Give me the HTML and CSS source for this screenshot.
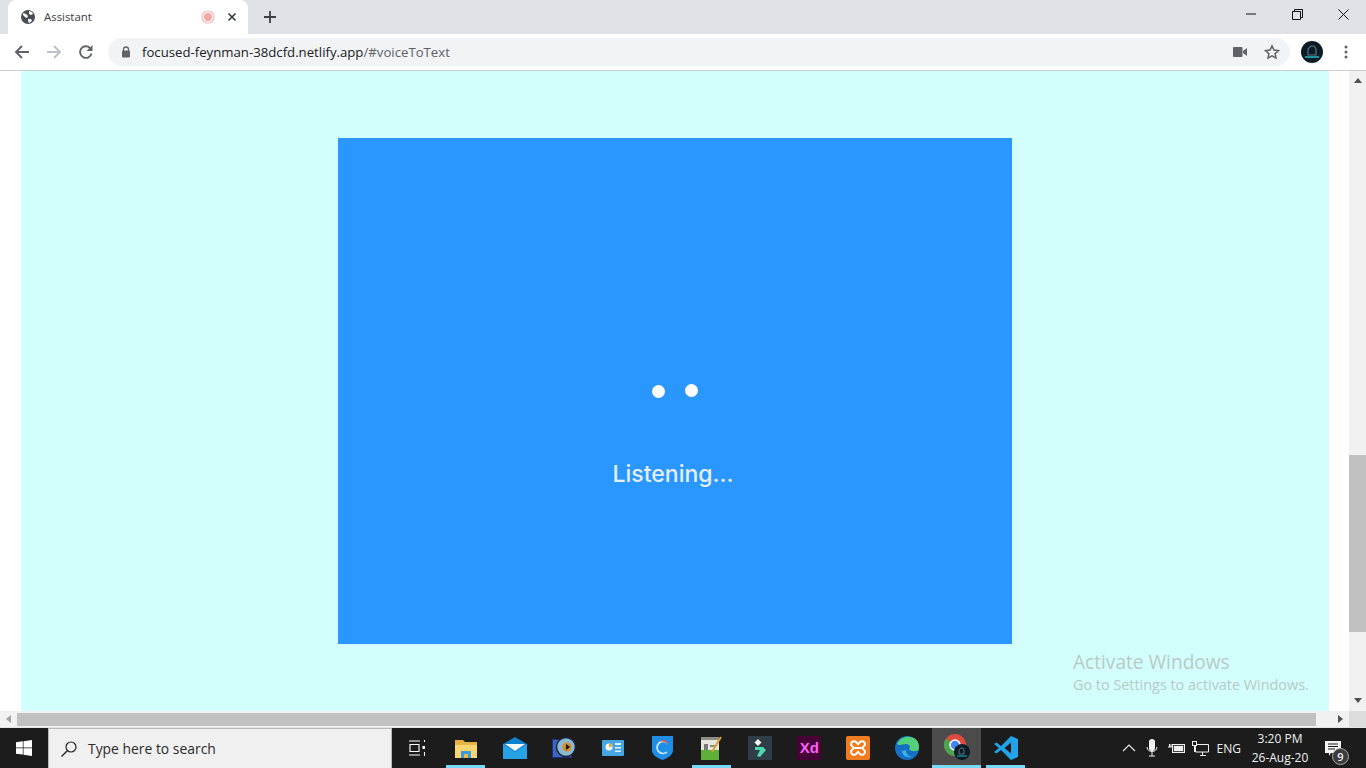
FILE: index.html
```html
<!DOCTYPE html>
<html lang="en">
  <head>
    <meta charset="UTF-8" />
    <meta name="viewport" content="width=device-width, initial-scale=1.0" />
    <title>Assistant</title>
    <link rel="stylesheet" href="styles.css">
  </head>
  <body>
    <div class="tabstrip">
      <div class="tab">
        <svg class="favicon" width="16" height="16" viewBox="0 0 16 16">
          <circle cx="8" cy="8" r="7" fill="#4a4d51" />
          <path d="M3 4l3 1 2 2-1 2-2-1-2-2zM9 2l3 1 1 2-2 1-2-1zM8 10l3 0 1 2-3 2-1-2z" fill="#fff" />
        </svg>
        <span class="tab-title">Assistant</span>
        <svg class="rec" width="14" height="14" viewBox="0 0 14 14">
          <circle cx="7" cy="7" r="6" fill="none" stroke="#f6b9b7" stroke-width="1.2" />
          <circle cx="7" cy="7" r="4.2" fill="#f5a9a6" />
        </svg>
        <svg class="tab-close" width="10" height="10" viewBox="0 0 10 10">
          <path d="M1.5 1.5l7 7M8.5 1.5l-7 7" stroke="#3c4043" stroke-width="1.7" />
        </svg>
      </div>
      <svg class="newtab" width="14" height="14" viewBox="0 0 14 14">
        <path d="M7 1v12M1 7h12" stroke="#3c4043" stroke-width="1.8" />
      </svg>
      <div class="winctl">
        <span class="winbtn">
          <svg width="10" height="2" viewBox="0 0 10 2"><path d="M0 1h10" stroke="#111" stroke-width="1" /></svg>
        </span>
        <span class="winbtn">
          <svg width="11" height="11" viewBox="0 0 11 11">
            <path d="M.5 2.5h8v8h-8zM2.5 2.5v-2h8v8h-2" fill="none" stroke="#111" stroke-width="1" />
          </svg>
        </span>
        <span class="winbtn">
          <svg width="11" height="11" viewBox="0 0 11 11"><path d="M.5.5l10 10M10.5.5l-10 10" stroke="#111" stroke-width="1" /></svg>
        </span>
      </div>
    </div>

    <div class="toolbar">
      <svg class="nav" width="16" height="16" viewBox="0 0 16 16">
        <path d="M15 8H2M8 2L2 8l6 6" fill="none" stroke="#5f6368" stroke-width="1.9" />
      </svg>
      <svg class="nav" width="16" height="16" viewBox="0 0 16 16">
        <path d="M1 8h13M8 2l6 6-6 6" fill="none" stroke="#bdc1c6" stroke-width="1.9" />
      </svg>
      <svg class="nav" width="16" height="16" viewBox="0 0 16 16">
        <path d="M13.5 9.5A5.8 5.8 0 1 1 12 4" fill="none" stroke="#5f6368" stroke-width="1.9" />
        <path d="M14.5 1v6h-6z" fill="#5f6368" />
      </svg>
      <div class="omnibox">
        <svg class="lock" width="10" height="12" viewBox="0 0 10 12">
          <path d="M2.5 5V3.5a2.5 2.5 0 0 1 5 0V5" fill="none" stroke="#5f6368" stroke-width="1.3" />
          <rect x="1" y="4.5" width="8" height="7" rx="1" fill="#5f6368" />
        </svg>
        <span class="url">focused-feynman-38dcfd.netlify.app<span class="url-rest">/#voiceToText</span></span>
        <svg class="cam" width="14" height="10" viewBox="0 0 14 10">
          <rect x="0" y="0" width="9.5" height="10" rx="1" fill="#5f6368" />
          <path d="M10 4l4-3v8l-4-3z" fill="#5f6368" />
        </svg>
        <svg class="star" width="16" height="16" viewBox="0 0 16 16">
          <path d="M8 1.8l1.9 4.2 4.6.5-3.4 3.1.9 4.5-4-2.300-4 2.300.9-4.500-3.400-3.100 4.600-.5z" fill="none" stroke="#5f6368" stroke-width="1.5" />
        </svg>
      </div>
      <svg class="avatar" width="22" height="22" viewBox="0 0 22 22">
        <circle cx="11" cy="11" r="11" fill="#0c1c26" />
        <path d="M7 14V8l3-3h3l2 3v6z" fill="none" stroke="#5c7282" stroke-width="1.2" />
        <path d="M4 16h14" stroke="#1fb5b5" stroke-width="1.6" />
      </svg>
      <svg class="menu" width="4" height="14" viewBox="0 0 4 14">
        <circle cx="2" cy="2" r="1.5" fill="#5f6368" />
        <circle cx="2" cy="7" r="1.5" fill="#5f6368" />
        <circle cx="2" cy="12" r="1.5" fill="#5f6368" />
      </svg>
    </div>

    <div class="viewport">
      <div class="page">
        <div class="panel">
          <div class="card">
            <div class="dots">
              <span class="dot"></span>
              <span class="dot dot-up"></span>
            </div>
            <p class="listening">Listening...</p>
          </div>
        </div>
        <div class="vscroll">
          <span class="arrow arrow-up"></span>
          <div class="vtrack"><div class="vthumb"></div></div>
          <span class="arrow arrow-down"></span>
        </div>
      </div>
      <div class="hscroll">
        <span class="arrow arrow-left"></span>
        <div class="hthumb"></div>
        <span class="arrow arrow-right"></span>
        <span class="corner"></span>
      </div>
      <div class="activate">
        <div class="activate-title">Activate Windows</div>
        <div class="activate-sub">Go to Settings to activate Windows.</div>
      </div>
    </div>

    <div class="taskbar">
      <div class="start">
        <svg width="16" height="16" viewBox="0 0 16 16">
          <path d="M0 2.3l6.8-1v6.200H0zM7.500 1.200L16 0v7.500H7.500zM0 8.300h6.800v6.300L0 13.700zM7.500 8.300H16V16l-8.500-1.200z" fill="#fff" />
        </svg>
      </div>
      <div class="search">
        <svg width="18" height="18" viewBox="0 0 18 18">
          <circle cx="11" cy="7" r="5" fill="none" stroke="#222" stroke-width="1.2" />
          <path d="M7.3 10.7L1.5 16.5" stroke="#222" stroke-width="1.3" />
        </svg>
        <span>Type here to search</span>
      </div>
      <div class="apps">
        <div class="app">
          <svg width="16" height="16" viewBox="0 0 16 16" fill="none" stroke="#fff" stroke-width="1.1">
            <path d="M0 1h11M0 15h11M1 4.5h9v7H1zM15.5 0v2M15.5 12v4" />
            <rect x="13.5" y="6" width="2.5" height="3" fill="#fff" stroke="none" />
          </svg>
        </div>
        <div class="app app-open">
          <svg width="22" height="19" viewBox="0 0 22 19">
            <path d="M0 1h8l2 2h12v5H0z" fill="#e5b13f" />
            <rect x="0" y="4" width="22" height="15" fill="#fbd56f" />
            <rect x="0" y="4" width="22" height="2" fill="#e8b54a" />
            <path d="M6 12h10v7h-3v-4H9v4H6z" fill="#3a9ae0" />
            <rect x="9" y="15" width="4" height="4" fill="#f0b840" />
          </svg>
        </div>
        <div class="app">
          <svg width="24" height="22" viewBox="0 0 24 22">
            <path d="M0 7L12 0l12 7v15H0z" fill="#0f7fd0" />
            <path d="M2 7h20l-10 7z" fill="#f4f8fb" />
            <path d="M0 7l12 8 12-8v15H0z" fill="#27a2e6" />
          </svg>
        </div>
        <div class="app">
          <svg width="24" height="22" viewBox="0 0 24 22">
            <rect x="0.5" y="2.5" width="19" height="18" fill="#3d66c4" stroke="#1e2e78" />
            <circle cx="14" cy="10" r="9.5" fill="#8bbad0" stroke="#1a2436" stroke-width="1.5" />
            <circle cx="15" cy="10" r="4.5" fill="#d98a24" />
            <path d="M14 7l4 3-4 3z" fill="#111" />
          </svg>
        </div>
        <div class="app">
          <svg width="22" height="16" viewBox="0 0 22 16">
            <rect width="22" height="16" rx="1" fill="#45a8e4" />
            <circle cx="7" cy="7" r="3.5" fill="#fff" />
            <path d="M7 7V3.5A3.5 3.5 0 0 1 10.5 7z" fill="#f0a93a" />
            <path d="M13 3h6v2h-6zM13 7h6v1.5h-6zM13 10.5h6V12h-6z" fill="#dff1fb" />
          </svg>
        </div>
        <div class="app">
          <svg width="21" height="24" viewBox="0 0 21 24">
            <path d="M0 0h21v14c0 5-5 8-10.5 10C5 22 0 19 0 14z" fill="#1f8fe6" />
            <path d="M15 7a6 6 0 1 0 0 9" fill="none" stroke="#d8eefc" stroke-width="1.6" />
            <path d="M9 5a6 6 0 0 1 6 2" fill="none" stroke="#e7553f" stroke-width="1.6" />
          </svg>
        </div>
        <div class="app app-open">
          <svg width="22" height="24" viewBox="0 0 22 24">
            <rect x="1" y="1" width="18" height="23" fill="#e6e6dc" />
            <path d="M1 14h18v10H1z" fill="#5fb03a" />
            <path d="M1 1h18v3H1z" fill="#8d8d84" />
            <path d="M5 8v6M7 8v6M10 10h5" stroke="#333" stroke-width="1.2" />
            <path d="M21 1L12 16" stroke="#d9a02e" stroke-width="2" />
          </svg>
        </div>
        <div class="app">
          <svg width="24" height="24" viewBox="0 0 24 24">
            <rect width="24" height="24" fill="#2f3e46" />
            <path d="M10 3l3.5 3.5L10 10 6.5 6.5z" fill="#f4f4f4" />
            <path d="M7 11h8l3 3-6 7-3-1 3-6H7z" fill="#4fd8b0" />
          </svg>
        </div>
        <div class="app">
          <div class="xd">Xd</div>
        </div>
        <div class="app">
          <svg width="24" height="24" viewBox="0 0 24 24">
            <rect width="24" height="24" rx="2" fill="#f07c22" />
            <path d="M5 8a3 3 0 0 1 5-2l2 2 2-2a3 3 0 0 1 5 2c0 2-2 3-3 4 1 1 3 2 3 4a3 3 0 0 1-5 2l-2-2-2 2a3 3 0 0 1-5-2c0-2 2-3 3-4-1-1-3-2-3-4zM9 12h6" fill="none" stroke="#fff" stroke-width="2" />
          </svg>
        </div>
        <div class="app">
          <svg width="24" height="24" viewBox="0 0 24 24">
            <circle cx="12" cy="12" r="12" fill="#1570c4" />
            <path d="M2 8C5 1 13-1 19 2c4 2 5.5 7 5 11-2 3-8 3-10 0 2-1 1-5-3-5-4 0-7 2-9 0z" fill="#52d07a" />
            <path d="M7 15c0 4 4 7 10 6-4-1-6-3-6-7z" fill="#3db3e8" />
          </svg>
        </div>
        <div class="app app-active">
          <svg width="26" height="26" viewBox="0 0 26 26">
            <circle cx="11" cy="11" r="11" fill="#dd4b3e" />
            <path d="M11 11L1.5 16.5A11 11 0 0 1 2 4.5z" fill="#4ba64f" />
            <path d="M11 22A11 11 0 0 1 1.5 16.5L11 11z" fill="#4ba64f" />
            <path d="M11 11h11a11 11 0 0 1-11 11z" fill="#f8c52c" />
            <circle cx="11" cy="11" r="5" fill="#4285f4" stroke="#fff" stroke-width="1.5" />
            <circle cx="18" cy="18" r="8" fill="#0c1c26" />
            <path d="M15 20v-4l2-2h2l1 2v4z" fill="none" stroke="#5c7282" />
            <path d="M13 22h10" stroke="#1fb5b5" />
          </svg>
        </div>
        <div class="app app-open">
          <svg width="24" height="24" viewBox="0 0 24 24">
            <path d="M17 0l7 3v18l-7 3L7 14l-4.5 3.5L0 16l5-4-5-4 2.5-1.5L7 10z" fill="#23a3ea" />
            <path d="M17 6.5L10.5 12l6.5 5.5z" fill="#1c1c1c" />
          </svg>
        </div>
      </div>
      <div class="tray">
        <svg class="tray-chev" width="14" height="8" viewBox="0 0 14 8">
          <path d="M1 7l6-6 6 6" fill="none" stroke="#e8e8e8" stroke-width="1.2" />
        </svg>
        <svg class="tray-mic" width="12" height="18" viewBox="0 0 12 18">
          <rect x="3" y="0" width="6" height="12" rx="3" fill="#f4f4f4" />
          <path d="M1 8c0 6 10 6 10 0M6 13v4M3 17h6" fill="none" stroke="#f4f4f4" />
        </svg>
        <svg class="tray-batt" width="17" height="12" viewBox="0 0 17 12">
          <rect x="4.5" y="2.5" width="12" height="8" fill="#444" stroke="#f0f0f0" />
          <rect x="6" y="4" width="9" height="5" fill="#f0f0f0" />
          <path d="M0 5h4M1.5 2v3M3 2v3" stroke="#f0f0f0" />
        </svg>
        <svg class="tray-net" width="17" height="15" viewBox="0 0 17 15">
          <path d="M3.5 3.5H16.5V11H3.5zM8 14.5h6M10.5 11v3.5" fill="none" stroke="#f0f0f0" />
          <rect x="0.5" y="0.5" width="4" height="4" fill="#1c1c1c" stroke="#f0f0f0" />
          <path d="M2.5 4.5V11" stroke="#f0f0f0" />
        </svg>
        <span class="tray-lang">ENG</span>
        <div class="clock">
          <div>3:20 PM</div>
          <div>26-Aug-20</div>
        </div>
        <div class="notif">
          <svg width="16" height="15" viewBox="0 0 16 15">
            <path d="M0 0h16v12H6l-2 3v-3H0z" fill="#f4f4f4" />
            <path d="M3 3h10M3 5.5h10M3 8h7" stroke="#1c1c1c" />
          </svg>
          <span class="badge">9</span>
        </div>
      </div>
    </div>
  </body>
</html>
```

FILE: styles.css
```css
* {
  margin: 0;
  padding: 0;
  box-sizing: border-box;
}
html,
body {
  height: 768px;
  overflow: hidden;
}
body {
  display: flex;
  flex-direction: column;
  width: 1366px;
  background: #fff;
  font-family: "Open Sans", "Liberation Sans", sans-serif;
}
svg {
  display: block;
  flex: none;
}

/* tabs */
.tabstrip {
  display: flex;
  align-items: center;
  height: 34px;
  padding-left: 8px;
  background: #dee1e6;
}
.tab {
  display: flex;
  align-items: center;
  width: 240px;
  height: 34px;
  padding: 0 11px 0 12px;
  border-radius: 8px 8px 0 0;
  background: #fff;
}
.tab-title {
  flex: 1;
  margin: -2px 0 0 8px;
  font-size: 11.4px;
  color: #3c4043;
}
.rec {
  margin-right: 12px;
}
.newtab {
  margin-left: 15px;
}
.winctl {
  display: flex;
  margin-left: auto;
  align-self: flex-start;
  padding-top: 8px;
}
.winbtn {
  display: flex;
  align-items: center;
  justify-content: center;
  width: 46px;
  height: 12px;
}

/* address bar */
.toolbar {
  display: flex;
  align-items: center;
  height: 37px;
  padding-left: 14px;
  border-bottom: 1px solid #ccced1;
  background: #fff;
}
.nav {
  margin-right: 16px;
}
.omnibox {
  display: flex;
  align-items: center;
  width: 1182px;
  height: 28px;
  margin-left: -2px;
  padding: 0 10px 0 13px;
  border-radius: 14px;
  background: #f1f3f4;
}
.url {
  flex: 1;
  margin-left: 11px;
  font-size: 13.2px;
  color: #202124;
}
.url-rest {
  color: #5f6368;
}
.cam {
  margin-right: 17px;
}
.avatar {
  margin-left: 11px;
}
.menu {
  margin-left: 21px;
}

/* page */
.viewport {
  position: relative;
  display: flex;
  flex-direction: column;
  flex: 1;
  min-height: 0;
}
.page {
  display: flex;
  flex: 1;
  min-height: 0;
  padding-left: 21px;
}
.panel {
  width: 1308px;
  padding: 67px 0 0 317px;
  background: #d2fffb;
}
.card {
  display: flex;
  flex-direction: column;
  align-items: center;
  width: 674px;
  height: 506px;
  padding-top: 247px;
  background: #2997ff;
}
.dots {
  display: flex;
  gap: 20px;
  margin-left: -1px;
}
.dot {
  width: 13px;
  height: 13px;
  border-radius: 50%;
  background: #fff;
}
.dot-up {
  margin-top: -1px;
}
.listening {
  margin-top: 59px;
  margin-left: -4px;
  font-family: Inter, "Open Sans", sans-serif;
  font-size: 23px;
  font-weight: 500;
  line-height: 34px;
  color: #e6eff8;
}

/* scrollbars */
.vscroll {
  display: flex;
  flex-direction: column;
  align-items: center;
  width: 17px;
  margin-left: 20px;
  background: #f1f1f1;
}
.vtrack {
  flex: 1;
  width: 100%;
}
.vthumb {
  width: 100%;
  height: 177px;
  margin-top: 372px;
  background: #c1c1c1;
}
.arrow {
  display: block;
  flex: none;
  width: 0;
  height: 0;
  border: 4px solid transparent;
}
.arrow-up {
  margin-top: 7px;
  border-top: 0;
  border-bottom: 5px solid #505050;
}
.arrow-down {
  margin-bottom: 8px;
  border-bottom: 0;
  border-top: 5px solid #505050;
}
.hscroll {
  display: flex;
  align-items: center;
  flex: none;
  height: 16px;
  background: #f1f1f1;
}
.arrow-left {
  margin: 0 6px 0 6px;
  border-left: 0;
  border-right: 5px solid #a3a3a3;
}
.hthumb {
  width: 1299px;
  height: 13px;
  margin-top: 1px;
  background: #c1c1c1;
}
.arrow-right {
  margin-left: 22px;
  border-right: 0;
  border-left: 5px solid #505050;
}
.corner {
  width: 17px;
  height: 100%;
  margin-left: 6px;
  background: #dcdcdc;
}
.activate {
  position: absolute;
  left: 1073px;
  top: 578px;
  color: #b9c9c7;
}
.activate-title {
  font-size: 19.1px;
  line-height: 26px;
}
.activate-sub {
  font-size: 14.4px;
  line-height: 19px;
}

/* windows taskbar */
.taskbar {
  display: flex;
  flex: none;
  height: 41px;
  background: #1c1c1c;
  border-top: 1px solid #e4e4e4;
}
.start {
  display: flex;
  align-items: center;
  justify-content: center;
  width: 48px;
}
.search {
  display: flex;
  align-items: center;
  gap: 10px;
  width: 344px;
  padding-left: 11px;
  border: 1px solid #b8b8b8;
  border-bottom: 0;
  background: #f0f0f0;
  font-size: 13.9px;
  color: #2b2b2b;
}
.apps {
  display: flex;
}
.app {
  position: relative;
  display: flex;
  align-items: center;
  justify-content: center;
  width: 49.1px;
  height: 40px;
}
.app-open::after {
  content: "";
  position: absolute;
  left: 5px;
  right: 5px;
  bottom: 0;
  height: 3px;
  background: #76d9f9;
}
.app-active {
  background: #4b4b4b;
  border-bottom: 3px solid #76d9f9;
}
.xd {
  width: 24px;
  height: 24px;
  border-radius: 2px;
  background: #470137;
  font-family: "Liberation Sans", sans-serif;
  font-size: 15px;
  font-weight: 700;
  line-height: 24px;
  text-align: center;
  color: #ff61f6;
}
.tray {
  display: flex;
  align-items: center;
  margin-left: auto;
  color: #f0f0f0;
}
.tray-chev {
  margin-right: 10px;
}
.tray-mic {
  margin-right: 10px;
}
.tray-batt {
  margin-right: 7px;
}
.tray-lang {
  margin-left: 8px;
  font-size: 12px;
}
.clock {
  width: 78px;
  font-size: 12px;
  line-height: 19px;
  text-align: center;
}
.notif {
  position: relative;
  width: 41px;
  margin-left: 6px;
}
.badge {
  position: absolute;
  left: 7px;
  top: 7px;
  width: 17px;
  height: 17px;
  border: 1px solid #aaa;
  border-radius: 50%;
  background: #3c3c3c;
  font-size: 11px;
  font-weight: 600;
  line-height: 15px;
  text-align: center;
  color: #f0f0f0;
}
```
